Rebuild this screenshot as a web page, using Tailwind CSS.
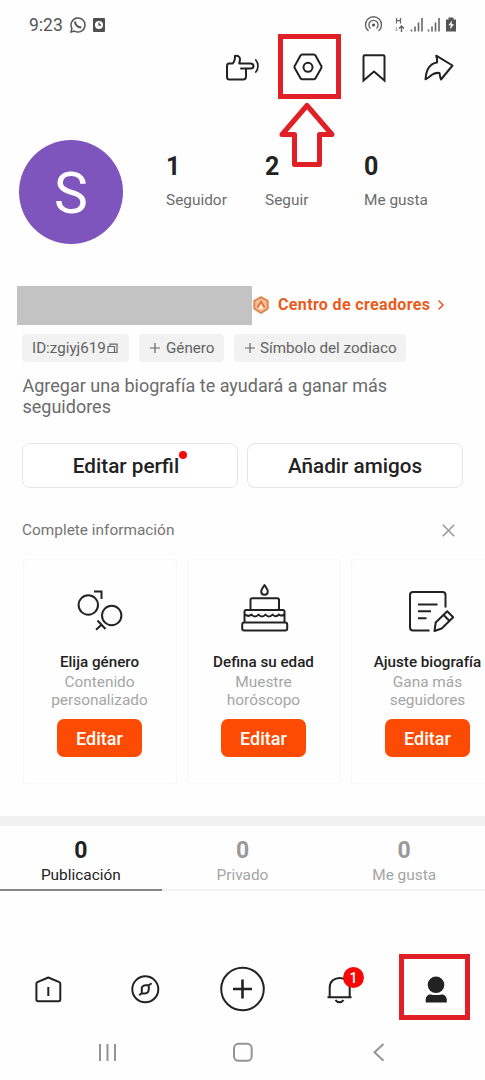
<!DOCTYPE html>
<html lang="es">
<head>
<meta charset="utf-8">
<title>Perfil</title>
<script src="https://cdn.jsdelivr.net/npm/@tailwindcss/browser@4"></script>
</head>
<body class="bg-white font-['Roboto',sans-serif] text-[#222]">
<div class="relative flex h-[1080px] w-[485px] flex-col overflow-hidden bg-[#fefefe]">

  <!-- Status bar -->
  <header class="flex h-[45px] shrink-0 items-center pt-[5px] pl-[29px] pr-[27px] text-[#555]">
    <span class="w-[40px] whitespace-nowrap text-[17.500px] leading-5">9:23</span>
    <svg class="h-[18px] w-[17px]" viewBox="68 16 17 18" fill="none" stroke="#555" stroke-width="1.5"><path d="M70 32l.9-3.6A7 7 0 1 1 73.600 31.100z"/><path d="M74 21.500c.2 3.500 2.800 5.800 6.200 5.900" stroke-width="2.200"/></svg>
    <svg class="ml-[7px] h-[16px] w-[12px]" viewBox="0 0 12 16"><rect y="1" width="12" height="14" rx="1" fill="#505050"/><circle cx="6" cy="8" r="4" fill="#fff"/><path d="M6 5.500V8h2" fill="none" stroke="#505050" stroke-width="1.300"/></svg>
    <svg class="ml-auto h-[20px] w-[95px]" viewBox="363 15 95 20" fill="none" stroke="#666" stroke-width="1.400">
      <circle cx="373.500" cy="25" r="1.600" fill="#555" stroke="none"/>
      <path d="M370.500 28.500a4.600 4.600 0 1 1 6 0M368.500 31a8 8 0 1 1 10 0"/>
      <path d="M396.500 18v5.500M400.500 18v5.500M396.500 20.700h4" stroke-width="1.200"/>
      <path d="M396.500 27v4M395 29.500l1.500 1.500 1.500-1.500" stroke-width=".8" stroke="#999"/>
      <path d="M401.500 32v-5M399 28.500l2.500-2.500 2.500 2.500" />
      <path d="M411.500 31.500v-2M415 31.500v-5M418.500 31.500v-9M422 31.500V18M428.500 31.500v-2M432 31.500v-5M435.500 31.500v-9M439 31.500V18" stroke-width="1.600"/>
      <path d="M446 19.500h2.500v-2h5v2h2.500v12h-10z" fill="#555" stroke="none"/>
      <path d="M452 20.500l-3.500 4.800h2.300l-.8 4.200 4-5.200h-2.400z" fill="#fff" stroke="none"/>
    </svg>
  </header>

  <!-- Toolbar -->
  <nav class="flex h-[45px] shrink-0 items-center pl-[223px]">
    <svg class="h-[40px] w-[240px]" viewBox="223 47 240 40" fill="none" stroke="#222" stroke-width="2" stroke-linejoin="round" stroke-linecap="round">
      <path d="M229 62.500h3.500c2-1.500 2.500-4 2.500-7.500 2.500-1 5 .6 5 3.200 0 1.500-.5 2.500-.8 4.300h11.300c4 0 4 5 0 5H246v8.300c0 1.800-1 2.700-2.700 2.700H229.500c-1.700 0-2.500-.9-2.500-2.500V65c0-1.600.6-2.500 2-2.500zM241 67.500h6"/>
      <path d="M255.800 59c2.900 3.400 2.900 8.800 0 12" stroke-width="1.700"/>
      <path d="M302.300 53.500h11.400c.8 0 1.400.3 1.800 1l5.800 10.400c.4.700.4 1.300 0 2l-5.800 10.400c-.4.700-1 1-1.800 1h-11.400c-.8 0-1.400-.3-1.800-1l-5.800-10.400c-.4-.7-.4-1.300 0-2l5.800-10.400c.4-.7 1-1 1.800-1z"/>
      <circle cx="308" cy="66.300" r="4.500"/>
      <path d="M363.500 55.500c0-.8.4-1.200 1.200-1.200h18.600c.8 0 1.200.4 1.200 1.200V79.500L374 70.500l-10.500 9z" stroke-linejoin="miter"/>
      <path d="M436.200 54.700L452.500 64.500 441 78.500c-1-1.800-1.200-3.800-1.500-6.500-3.500-.5-5.500.3-7.500 1.700-1.500 1.200-3 2.800-6.500 4.600.5-8.800 3.700-15.500 11.500-16.800.4-2.500 0-4.600-.8-6.800z"/>
    </svg>
  </nav>

  <!-- Avatar and counters -->
  <section class="flex h-[196px] shrink-0 pl-[19px]">
    <div class="mt-[50px] flex h-[104px] w-[104px] items-center justify-center rounded-full bg-[#7e55bd] text-[57px] leading-none text-white"><span class="relative top-px">S</span></div>
    <div class="ml-[43px] mt-[63px] grid h-[70px] grid-cols-[99px_99px_99px]">
      <div><div class="text-[25px] font-bold leading-7">1</div><div class="mt-[9px] text-[15.400px] leading-5 text-[#6c6c6c]">Seguidor</div></div>
      <div><div class="text-[25px] font-bold leading-7">2</div><div class="mt-[9px] text-[15.400px] leading-5 text-[#6c6c6c]">Seguir</div></div>
      <div><div class="text-[25px] font-bold leading-7">0</div><div class="mt-[9px] text-[15.400px] leading-5 text-[#6c6c6c]">Me gusta</div></div>
    </div>
  </section>

  <!-- Name row -->
  <section class="flex h-[39px] shrink-0 items-center pl-[17px]">
    <div class="h-[39px] w-[235px] bg-[#c3c3c3]"></div>
    <svg class="mb-[2px] h-[20px] w-[18px]" viewBox="0 0 18 20" fill="none"><path d="M9 2.200l6.700 3.700v7.700L9 18l-6.700-4.400V5.900z" fill="#f3c19f" stroke="#dd8650" stroke-width="2" stroke-linejoin="round"/><path d="M5.200 12.500L9 6.500l3.800 6" stroke="#e5702e" stroke-width="1.600"/><path d="M9 10l-2 3.500h4z" fill="#fff"/></svg>
    <span class="mb-px ml-[8px] w-[159px] whitespace-nowrap text-[16px] font-bold leading-5 tracking-[0.35px] text-[#eb5b1a]">Centro de creadores</span>
    <svg class="mb-px h-[12px] w-[8px]" viewBox="0 0 8 12" fill="none" stroke="#e2622a" stroke-width="1.600"><path d="M1.500 1.500l4.500 4.500-4.500 4.500"/></svg>
  </section>

  <!-- Tags -->
  <section class="mt-[9px] flex h-[28px] shrink-0 gap-[10px] whitespace-nowrap pl-[22px] text-[15.200px] leading-[28px] text-[#626262]">
    <div class="flex w-[107px] items-center rounded bg-[#f2f2f2] pl-[10px]"><span class="w-[75px]">ID:zgiyj619</span>
      <svg class="h-[11px] w-[11px]" viewBox="0 0 11 11" fill="none" stroke="#666" stroke-width="1.200"><path d="M1 3.500h6.500v6H1zM3 3.500V1.200h7v8.300H7.500"/></svg></div>
    <div class="flex w-[85px] items-center rounded bg-[#f2f2f2] pl-[11px]">
      <svg class="mr-[6px] h-[10px] w-[10px]" viewBox="0 0 10 10" stroke="#666" stroke-width="1.200"><path d="M5 0v10M0 5h10"/></svg><span>Género</span></div>
    <div class="flex w-[172px] items-center rounded bg-[#f2f2f2] pl-[11px]">
      <svg class="mr-[5px] h-[10px] w-[10px]" viewBox="0 0 10 10" stroke="#666" stroke-width="1.200"><path d="M5 0v10M0 5h10"/></svg><span>Símbolo del zodiaco</span></div>
  </section>

  <p class="mt-[13px] h-[42px] shrink-0 whitespace-nowrap pl-[22.500px] text-[18px] leading-[21px] text-[#6b6b6b]">Agregar una biografía te ayudará a ganar más<br>seguidores</p>

  <!-- Profile actions -->
  <section class="mt-[26px] flex h-[45px] shrink-0 gap-[9px] pl-[22px]">
    <button class="relative w-[216px] rounded-lg border-[1.500px] border-[#e6e6e6] bg-white pt-[2px] pr-[8px] text-[20.700px] font-medium">Editar perfil<span class="absolute left-[156px] top-[7px] h-[8px] w-[8px] rounded-full bg-[#f80808]"></span></button>
    <button class="w-[216px] rounded-lg border-[1.500px] border-[#e6e6e6] bg-white pt-[2px] text-[20.700px] font-medium">Añadir amigos</button>
  </section>

  <div class="mt-[32px] flex h-[20px] shrink-0 items-center justify-between pl-[22px] pr-[30px] text-[15.400px] text-[#757575]">
    <span class="pt-[2px]">Complete información</span>
    <svg class="h-[13px] w-[13px]" viewBox="0 0 13 13" stroke="#999" stroke-width="1.600"><path d="M.8.800l11.400 11.400M12.200.8L.8 12.200"/></svg>
  </div>

  <!-- Suggestion cards -->
  <section class="mt-[19px] flex h-[225px] shrink-0 gap-[10px] pl-[22.500px]">
    <article class="flex w-[154px] shrink-0 flex-col items-center rounded border border-[#f9f9f9]">
      <svg class="mt-[19px] h-[60px] w-[60px]" viewBox="70 579 60 60" fill="none" stroke="#222" stroke-width="2"><circle cx="88.300" cy="605" r="9.700"/><circle cx="111.700" cy="615.500" r="9.700"/><path d="M94 591.500h7.500v7.500M97.500 620.500l8 8.500M96 629.700l5.500-5"/></svg>
      <h3 class="mt-[14px] whitespace-nowrap text-[15.200px] font-medium leading-[18px]">Elija género</h3>
      <p class="mt-[2px] text-center text-[15.400px] leading-[18px] text-[#a5a5a5]">Contenido<br>personalizado</p>
      <button class="mt-[10px] h-[38px] w-[85px] rounded-[7px] bg-[#fd4b03] text-[18px] font-medium text-white">Editar</button>
    </article>
    <article class="flex w-[154px] shrink-0 flex-col items-center rounded border border-[#f9f9f9]">
      <svg class="mt-[19px] h-[60px] w-[60px]" viewBox="234 579 60 60" fill="none" stroke="#222" stroke-width="2" stroke-linejoin="round"><path d="M264.500 585c2 3 3.300 4.700 3.300 6.500 0 4.300-6.600 4.300-6.600 0 0-1.800 1.300-3.500 3.300-6.500z"/><path d="M250.500 610v-10c0-1.200.7-1.800 1.800-1.800h25c1.100 0 1.700.6 1.700 1.800v10M244.500 622.500v-10.700c0-1.200.7-1.800 1.800-1.800h36.500c1.100 0 1.700.6 1.700 1.800v10.700M245 614.500c2 1.700 4.500 1.700 6.500 0 2 2.500 5 2.500 7 0 2 2.700 5 2.700 7 0 2 2.700 5 2.700 7 0 1.800 2.300 4.500 2.300 6.500 0 1.800 1.500 3.500 1.500 5 0"/><rect x="242.200" y="622.500" width="45" height="8" rx="2"/></svg>
      <h3 class="mt-[14px] whitespace-nowrap text-[15.200px] font-medium leading-[18px]">Defina su edad</h3>
      <p class="mt-[2px] text-center text-[15.400px] leading-[18px] text-[#a5a5a5]">Muestre<br>horóscopo</p>
      <button class="mt-[10px] h-[38px] w-[85px] rounded-[7px] bg-[#fd4b03] text-[18px] font-medium text-white">Editar</button>
    </article>
    <article class="flex w-[154px] shrink-0 flex-col items-center rounded border border-[#f9f9f9]">
      <svg class="mt-[19px] h-[60px] w-[60px]" viewBox="398 579 60 60" fill="none" stroke="#222" stroke-width="2" stroke-linejoin="round"><path d="M429.500 630.500H413c-2 0-3-1-3-3V595c0-2 1-3 3-3h29.500c2 0 3 1 3 3v12.500M418 604.500h19.500M418 611.300h13M418 618.300h8.500"/><path d="M434.500 631l1.200-8.500 11.500-11.300 6 6-11.500 11.300zM443.500 614.800l5.500 5.700"/></svg>
      <h3 class="mt-[14px] whitespace-nowrap text-[15.200px] font-medium leading-[18px]">Ajuste biografía</h3>
      <p class="mt-[2px] text-center text-[15.400px] leading-[18px] text-[#a5a5a5]">Gana más<br>seguidores</p>
      <button class="mt-[10px] h-[38px] w-[85px] rounded-[7px] bg-[#fd4b03] text-[18px] font-medium text-white">Editar</button>
    </article>
  </section>

  <!-- Tabs -->
  <div class="mt-[32px] h-[10px] shrink-0 bg-[#f1f1f1]"></div>
  <section class="grid h-[65px] shrink-0 grid-cols-3 text-center">
    <div class="border-b-2 border-[#858585] pt-[12px]"><div class="text-[23px] font-bold leading-[26px]">0</div><div class="text-[15.400px] leading-[22px]">Publicación</div></div>
    <div class="border-b-2 border-[#f1f1f1] pt-[12px] text-[#999]"><div class="text-[23px] font-bold leading-[26px]">0</div><div class="text-[15.400px] leading-[22px] text-[#a5a5a5]">Privado</div></div>
    <div class="border-b-2 border-[#f1f1f1] pt-[12px] text-[#999]"><div class="text-[23px] font-bold leading-[26px]">0</div><div class="text-[15.400px] leading-[22px] text-[#a5a5a5]">Me gusta</div></div>
  </section>

  <!-- Bottom navigation -->
  <footer class="mt-auto flex shrink-0 flex-col">
    <nav class="flex h-[80px] pl-[28px]">
      <svg class="h-[80px] w-[40px]" viewBox="28 947 40 80" fill="none" stroke="#222" stroke-width="2" stroke-linejoin="round"><path d="M48.300 977.500l11 4.700c.7.300 1 .8 1 1.500V999.500c0 1.200-.6 1.800-1.800 1.800H38.200c-1.200 0-1.800-.6-1.800-1.800V983.700c0-.7.300-1.200 1-1.500zM48.300 987v9"/></svg>
      <svg class="ml-[57px] h-[80px] w-[40px]" viewBox="125 947 40 80" fill="none" stroke="#222" stroke-width="2"><circle cx="145.300" cy="989.300" r="13"/><path d="M141.800 987.500c.8-1.500 2-2.300 3.500-2.300h3.500v3.500c0 3-1.500 4.700-4 4.700h-3zM147.800 986l3.800-2.700M142.500 992.500l-3.300 2.700"/></svg>
      <svg class="ml-[52px] h-[80px] w-[50px]" viewBox="217 947 50 80" fill="none" stroke="#222" stroke-width="2"><circle cx="242.500" cy="989" r="21.300"/><path d="M242.500 979.500v19M233 989h19" stroke-width="2.600"/></svg>
      <div class="relative ml-[54px] h-[80px] w-[44px]">
        <svg class="h-[80px] w-[44px]" viewBox="321 947 44 80" fill="none" stroke="#222" stroke-width="2" stroke-linejoin="round"><path d="M327.500 997.300h24M329.700 997v-9.500c0-12.700 20-12.700 20 0v9.500M335.500 1000c1.800 3 6.200 3 8 0"/></svg>
        <span class="absolute left-[22px] top-[20px] flex h-[21px] w-[21px] items-center justify-center rounded-full bg-[#f80707] text-[14px] font-medium leading-none text-white">1</span>
      </div>
      <div class="ml-[34px] mt-[7px] flex h-[66px] w-[71px] items-center justify-center border-[5px] border-[#e11f26]">
        <svg class="h-[50px] w-[40px]" viewBox="415 962 40 50" fill="#222"><circle cx="436" cy="984.800" r="8.300"/><path d="M425.700 1002.500v-2.500c0-3.500 2-5.500 5-5.500 3 .8 7.800.8 10.800 0 3 0 5.300 2 5.300 5.500v2.500z"/></svg>
      </div>
    </nav>
    <div class="flex h-[53px] items-start pl-[96px]">
      <svg class="h-[50px] w-[300px]" viewBox="96 1027 300 50" fill="none" stroke="#949494" stroke-width="2"><path d="M100 1044v17M107.500 1044v17M115 1044v17"/><rect x="234" y="1043.800" width="17.700" height="17" rx="4.500"/><path d="M383.500 1044l-9 8.300 9 8.500"/></svg>
    </div>
  </footer>

  <!-- Highlight of the settings button -->
  <div class="absolute left-[278px] top-[34px] h-[65px] w-[63px] border-[5px] border-[#e11f26]"></div>
  <svg class="absolute left-[270px] top-[95px] h-[80px] w-[75px]" viewBox="270 95 75 80" fill="none" stroke="#e11f26" stroke-width="5" stroke-linejoin="round"><path d="M307 105.500L332 134.500H319.500V164.500H294.500V134.500H282z"/></svg>
</div>
</body>
</html>
